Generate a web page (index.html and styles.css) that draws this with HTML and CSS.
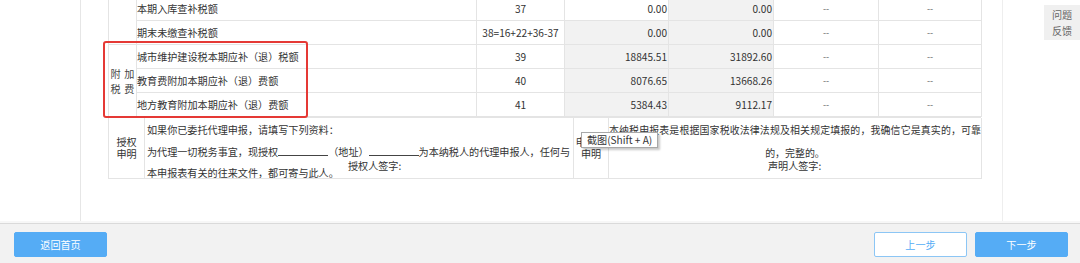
FILE: index.html
```html
<!DOCTYPE html>
<html lang="zh-CN">
<head>
<meta charset="utf-8">
<title>申报表</title>
<link rel="stylesheet" href="styles.css">
</head>
<body>
<div class="page">
  <div class="main">
    <div class="spacer"></div>
    <div class="panel">
      <div class="sheet">
        <div class="grid">
          <div class="c side span2"></div>
          <div class="c name">本期入库查补税额</div>
          <div class="c num">37</div>
          <div class="c val">0.00</div>
          <div class="c val g">0.00</div>
          <div class="c dash">--</div>
          <div class="c dash">--</div>

          <div class="c name">期末未缴查补税额</div>
          <div class="c num">38=16+22+36-37</div>
          <div class="c val g">0.00</div>
          <div class="c val g">0.00</div>
          <div class="c dash">--</div>
          <div class="c dash">--</div>

          <div class="c side span3"><span class="pair">附加</span><span class="pair">税费</span></div>
          <div class="c name">城市维护建设税本期应补（退）税额</div>
          <div class="c num">39</div>
          <div class="c val g">18845.51</div>
          <div class="c val g">31892.60</div>
          <div class="c dash">--</div>
          <div class="c dash">--</div>

          <div class="c name">教育费附加本期应补（退）费额</div>
          <div class="c num">40</div>
          <div class="c val g">8076.65</div>
          <div class="c val g">13668.26</div>
          <div class="c dash">--</div>
          <div class="c dash">--</div>

          <div class="c name">地方教育附加本期应补（退）费额</div>
          <div class="c num">41</div>
          <div class="c val g">5384.43</div>
          <div class="c val g">9112.17</div>
          <div class="c dash">--</div>
          <div class="c dash">--</div>
        </div>

        <div class="auth">
          <div class="a head"><span>授权</span><span>申明</span></div>
          <div class="a body">
            <p class="l1">如果你已委托代理申报，请填写下列资料：</p>
            <p class="l2">为代理一切税务事宜，现授权<span class="blank"></span>（地址）<span class="blank"></span>为本纳税人的代理申报人，任何与<br>本申报表有关的往来文件，都可寄与此人。</p>
            <span class="sign sign-l">授权人签字:</span>
          </div>
          <div class="a head"><span>申报人</span><span>申明</span></div>
          <div class="a decl">
            <p class="dtext">本纳税申报表是根据国家税收法律法规及相关规定填报的，我确信它是真实的，可靠的，完整的。</p>
            <span class="sign sign-r">声明人签字:</span>
          </div>
        </div>

        <div class="mark"></div>
        <div class="tip">截图(Shift + A)</div>
      </div>
    </div>
    <div class="feedback">问题<br>反馈</div>
  </div>
  <div class="strip"></div>
  <div class="footer">
    <button class="btn primary">返回首页</button>
    <div class="grow"></div>
    <button class="btn ghost">上一步</button>
    <button class="btn primary">下一步</button>
  </div>
</div>
</body>
</html>
```

FILE: styles.css
```css
* { box-sizing: border-box; }
html, body { margin: 0; padding: 0; background: #ffffff; }
body {
  font-family: "Noto Sans CJK SC", "Microsoft YaHei", sans-serif;
  font-size: 10.1px;
  color: #333333;
}
p { margin: 0; }

.page {
  width: 1080px;
  height: 263px;
  display: flex;
  flex-direction: column;
  overflow: hidden;
}

.main {
  position: relative;
  height: 221px;
  display: flex;
  flex: none;
}
.spacer { width: 80px; flex: none; }
.panel {
  width: 923px;
  height: 221px;
  flex: none;
  border-left: 1px solid #e6e6e6;
  border-right: 1px solid #eeeeee;
  overflow: hidden;
  background: #ffffff;
}
.sheet {
  position: relative;
  width: 873px;
  margin-left: 27px;
  margin-top: -3px;
}

.grid {
  display: grid;
  grid-template-columns: 28px 340px 88px 104px 105px 105px 103px;
  grid-auto-rows: 24px;
  border-left: 1px solid #e4e4e4;
}
.c {
  border-right: 1px solid #e4e4e4;
  border-bottom: 1px solid #e4e4e4;
  display: flex;
  align-items: center;
  white-space: nowrap;
  overflow: hidden;
}
.span2 { grid-row: span 2; }
.span3 { grid-row: span 3; }
.side {
  flex-direction: column;
  justify-content: center;
  line-height: 15px;
  color: #444444;
}
.pair { letter-spacing: 3.6px; padding-left: 3.6px; }
.name { padding-left: 0; }
.num { justify-content: center; }
.val { justify-content: flex-end; padding-right: 1px; }
.g { background: #f2f2f2; }
.dash { justify-content: center; color: #666666; font-size: 9px; }

.auth {
  display: grid;
  grid-template-columns: 36px 429px 35px 373px;
  grid-template-rows: 61px;
  border-left: 1px solid #e4e4e4;
  border-top: 1px solid #e4e4e4;
}
.a {
  border-right: 1px solid #e4e4e4;
  border-bottom: 1px solid #e4e4e4;
  overflow: hidden;
}
.head {
  display: flex;
  flex-direction: column;
  justify-content: center;
  align-items: center;
  line-height: 12.5px;
}
.body {
  position: relative;
  padding: 1px 0 0 2px;
  white-space: nowrap;
}
.l1 { line-height: 21px; }
.l2 { line-height: 20.5px; margin-top: 2px; }
.blank {
  display: inline-block;
  width: 50px;
  height: 9px;
  border-bottom: 1px solid #444444;
  vertical-align: baseline;
}
.sign {
  position: absolute;
  line-height: 12px;
  white-space: nowrap;
}
.sign-l { left: 203px; top: 42px; }
.decl { position: relative; }
.dtext {
  font-size: 9.95px;
  line-height: 23px;
  text-align: justify;
  text-align-last: center;
}
.sign-r { left: 159px; top: 42px; }

.mark {
  position: absolute;
  left: -5px;
  top: 44px;
  width: 205px;
  height: 77px;
  border: 2px solid #e53935;
  border-radius: 3px;
}
.tip {
  position: absolute;
  left: 473px;
  top: 135px;
  width: 77px;
  height: 16px;
  padding-left: 5px;
  line-height: 14px;
  background: #ffffff;
  border: 1px solid #a8a8a8;
  box-shadow: 2px 2px 2px rgba(0, 0, 0, 0.22);
  white-space: nowrap;
  color: #333333;
}

.feedback {
  position: absolute;
  left: 1044px;
  top: 5px;
  width: 36px;
  height: 35px;
  background: #f0f0f0;
  color: #666666;
  text-align: center;
  line-height: 16px;
  padding-top: 2px;
}

.strip { height: 2px; flex: none; background: #f7f7f7; }
.footer {
  flex: 1;
  display: flex;
  align-items: flex-start;
  padding: 8px 12px 0 14px;
  background: #f2f2f2;
  border-top: 1px solid #dadada;
  gap: 8px;
}
.grow { flex: 1; }
.btn {
  width: 93px;
  height: 25px;
  border-radius: 2px;
  font-family: inherit;
  font-size: 10.1px;
  padding: 0;
  cursor: pointer;
}
.primary {
  background: #55acf5;
  border: 1px solid #55acf5;
  color: #ffffff;
}
.ghost {
  background: #ffffff;
  border: 1px solid #8cc6f5;
  color: #55acf5;
}
```
